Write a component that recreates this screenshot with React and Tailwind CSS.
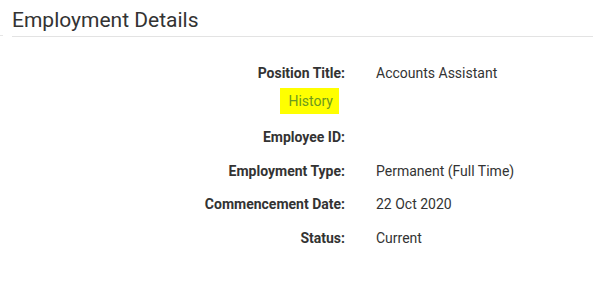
export default function App() {
  const rows = [
    { label: 'Employee ID:', value: '' },
    { label: 'Employment Type:', value: 'Permanent (Full Time)' },
    { label: 'Commencement Date:', value: '22 Oct 2020' },
    { label: 'Status:', value: 'Current' },
  ];

  return (
    <div className="w-[593px] h-[306px] bg-white text-[#333] font-['Roboto',sans-serif]">
      <div className="flex items-end">
        <div className="w-[3px] h-px bg-[#e6e6e6] mb-[1px]" />
        <div className="flex-1 ml-[9px] pt-[8px] pb-[3px] border-b border-[#e3e3e3]">
          <h2 className="text-[21px] leading-[25px] font-normal text-[#333]">Employment Details</h2>
        </div>
      </div>

      <div className="pt-[26px]">
        <div className="flex text-[14px] leading-[20px]">
          <div className="w-[345px] text-right font-bold">Position Title:</div>
          <div className="ml-[31px]">Accounts Assistant</div>
        </div>
        <div className="w-[345px] flex justify-end mt-[5px]">
          <span className="mr-[6px] pl-[8px] pr-[6px] leading-[26px] text-[14px] bg-[#ffff00] text-[#6c9a1f]">History</span>
        </div>

        <div className="flex flex-col gap-[13.5px] mt-[13px]">
          {rows.map((r) => (
            <div key={r.label} className="flex text-[14px] leading-[20px] h-[20px]">
              <div className="w-[345px] text-right font-bold">{r.label}</div>
              <div className="ml-[31px]">{r.value}</div>
            </div>
          ))}
        </div>
      </div>
    </div>
  );
}
